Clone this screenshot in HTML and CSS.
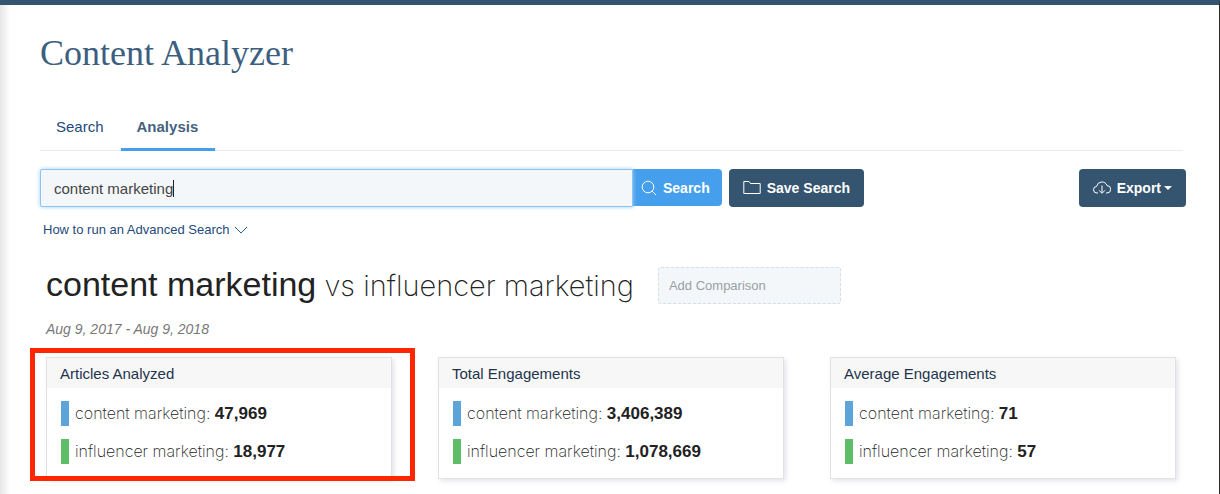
FILE: index.html
```html
<!DOCTYPE html>
<html lang="en">
<head>
<meta charset="utf-8">
<title>Content Analyzer</title>
<link rel="stylesheet" href="styles.css">
</head>
<body>
<div class="page">
  <h1 class="title">Content Analyzer</h1>

  <nav class="tabs">
    <a class="tab" href="#search">Search</a>
    <a class="tab tab-active" href="#analysis">Analysis</a>
  </nav>

  <form class="toolbar">
    <div class="field">
      <input class="query" type="text" aria-label="Search query" value="content marketing">
      <span class="caret"></span>
    </div>
    <button class="btn btn-search" type="button">
      <svg class="icon" width="16" height="16" viewBox="0 0 16 16"><circle cx="7" cy="7" r="5.8"/><path d="M11.2 11.2 15 15"/></svg>
      Search
    </button>
    <button class="btn btn-dark btn-save" type="button">
      <svg class="icon" width="18" height="16" viewBox="0 0 18 16"><path d="M.8 13.5V1.5H6l1.500 2h9.700v10z"/></svg>
      Save Search
    </button>
    <button class="btn btn-dark btn-export" type="button">
      <svg class="icon" width="18" height="16" viewBox="0 0 18 16"><path d="M5 13H4A3.300 3.300 0 0 1 3.600 6.400A5.400 5.400 0 0 1 14 5.600A3.700 3.700 0 0 1 14 13H13M9 5.500V13M6 10.300 9 13.300l3-3"/></svg>
      Export
      <svg class="drop" width="8" height="4" viewBox="0 0 8 4"><path d="M0 0h8L4 4z"/></svg>
    </button>
  </form>

  <a class="help" href="#advanced">How to run an Advanced Search
    <svg class="chevron" width="14" height="8" viewBox="0 0 14 8"><path d="M1 1l6 6 6-6"/></svg>
  </a>

  <main class="results">
    <div class="compare">
      <h2 class="topic"><strong>content marketing</strong> vs influencer marketing</h2>
      <input class="add" type="text" aria-label="Add Comparison" placeholder="Add Comparison">
    </div>
    <p class="dates">Aug 9, 2017 - Aug 9, 2018</p>

    <div class="cards">
      <section class="card card-marked">
        <h3 class="card-title">Articles Analyzed</h3>
        <ul class="stats">
          <li class="stat stat-blue">content marketing: <b>47,969</b></li>
          <li class="stat stat-green">influencer marketing: <b>18,977</b></li>
        </ul>
      </section>
      <section class="card">
        <h3 class="card-title">Total Engagements</h3>
        <ul class="stats">
          <li class="stat stat-blue">content marketing: <b>3,406,389</b></li>
          <li class="stat stat-green">influencer marketing: <b>1,078,669</b></li>
        </ul>
      </section>
      <section class="card">
        <h3 class="card-title">Average Engagements</h3>
        <ul class="stats">
          <li class="stat stat-blue">content marketing: <b>71</b></li>
          <li class="stat stat-green">influencer marketing: <b>57</b></li>
        </ul>
      </section>
    </div>
  </main>
</div>
</body>
</html>
```

FILE: styles.css
```css
* { box-sizing: border-box; }

body {
  margin: 0;
  background: #fff;
  color: #222;
  font-family: "Helvetica Neue", "Liberation Sans", Arial, sans-serif;
  font-size: 14px;
}

.page {
  min-height: 100vh;
  padding: 28px 33px 15px 40px;
  border-top: 5px solid #34546f;
  border-right: 1px solid #2c2d20;
  background: linear-gradient(to right, #e6e6e6, #fff 10px);
}

.title {
  margin: 0;
  color: #3d5f7f;
  font-family: "Roboto Slab", "Liberation Serif", serif;
  font-size: 36px;
  font-weight: 300;
  line-height: 40px;
}

.tabs {
  display: flex;
  margin: 30px 3px 0 0;
  border-bottom: 1px solid #ebebeb;
}

.tab {
  margin-bottom: -1px;
  padding: 13px 17px 11px 16px;
  border-bottom: 3px solid transparent;
  color: #1f4a7d;
  font-size: 15px;
  line-height: 21px;
  text-decoration: none;
}

.tab-active {
  border-bottom-color: #459fed;
  color: #44617e;
  font-weight: 700;
}

.toolbar {
  display: flex;
  align-items: flex-start;
  margin-top: 18px;
}

.field {
  position: relative;
  flex: 0 1 593px;
}

.query {
  display: block;
  width: 100%;
  height: 38px;
  padding: 0 13px;
  border: 1px solid #8fc4f2;
  border-radius: 2px 0 0 2px;
  outline: none;
  background: #f3f7fa;
  box-shadow: 0 0 4px #9dcdf5;
  color: #444;
  font: inherit;
  font-size: 15px;
}

.caret {
  position: absolute;
  top: 11px;
  left: 133px;
  width: 1px;
  height: 17px;
  background: #222;
}

.btn {
  display: flex;
  align-items: center;
  gap: 6px;
  height: 38px;
  padding: 0 14px;
  border: 0;
  border-radius: 4px;
  color: #fff;
  font: inherit;
  font-size: 14px;
  font-weight: 700;
  white-space: nowrap;
}

.btn-search {
  height: 37px;
  padding: 0 12px 0 8px;
  border-radius: 0 4px 4px 0;
  background: #459fed;
}

.btn-dark { background: #34546f; }

.btn-save { margin-left: 7px; }

.btn-export { margin-left: auto; }

.icon {
  fill: none;
  stroke: #fff;
  stroke-width: 1;
}

.drop {
  margin-left: -3px;
  fill: #fff;
}

.help {
  display: inline-flex;
  align-items: center;
  gap: 5px;
  margin: 14px 0 0 3px;
  color: #1f4a7d;
  font-size: 13px;
  line-height: 18px;
  text-decoration: none;
}

.chevron {
  fill: none;
  stroke: #2b6190;
}

.results { padding: 27px 10px 0 6px; }

.compare {
  display: flex;
  align-items: center;
  gap: 24px;
}

.topic {
  margin: 0;
  font-family: Inter, sans-serif;
  font-size: 29px;
  font-weight: 200;
  line-height: 36px;
}

.topic strong {
  font-family: "Helvetica Neue", "Liberation Sans", Arial, sans-serif;
  font-size: 34px;
  font-weight: 400;
}

.add {
  width: 183px;
  height: 37px;
  padding: 0 10px;
  border: 1px dashed #d5dee4;
  border-radius: 3px;
  background: #f3f7fa;
  font: inherit;
  font-size: 13px;
}

.add::placeholder { color: #999fa4; }

.dates {
  margin: 16px 0 0;
  color: #777;
  font-size: 14px;
  font-style: italic;
  line-height: 18px;
}

.cards {
  display: grid;
  grid-template-columns: repeat(3, 1fr);
  gap: 46px;
  margin-top: 19px;
}

.card {
  position: relative;
  border: 1px solid #e2e2e5;
  background: #fff;
  box-shadow: 2px 2px 5px #e2e4e8;
}

.card-marked::after {
  content: "";
  position: absolute;
  inset: -10px -24px -3px -17px;
  border: 5px solid #ff2600;
}

.card-title {
  margin: 0;
  padding: 7px 13px 5px;
  background: #f7f7f7;
  color: #22344b;
  font-size: 15px;
  font-weight: 400;
  line-height: 18px;
}

.stats {
  display: grid;
  gap: 13px;
  margin: 0;
  padding: 13px 14px 14px;
  list-style: none;
}

.stat {
  padding-left: 6px;
  border-left: 8px solid;
  font-family: Inter, sans-serif;
  font-size: 16px;
  font-weight: 200;
  line-height: 25px;
}

.stat b {
  font-family: "Helvetica Neue", "Liberation Sans", Arial, sans-serif;
  font-size: 17px;
  font-weight: 700;
  line-height: 1;
}

.stat-blue { border-left-color: #5da4db; }

.stat-green { border-left-color: #5fbd68; }
```
